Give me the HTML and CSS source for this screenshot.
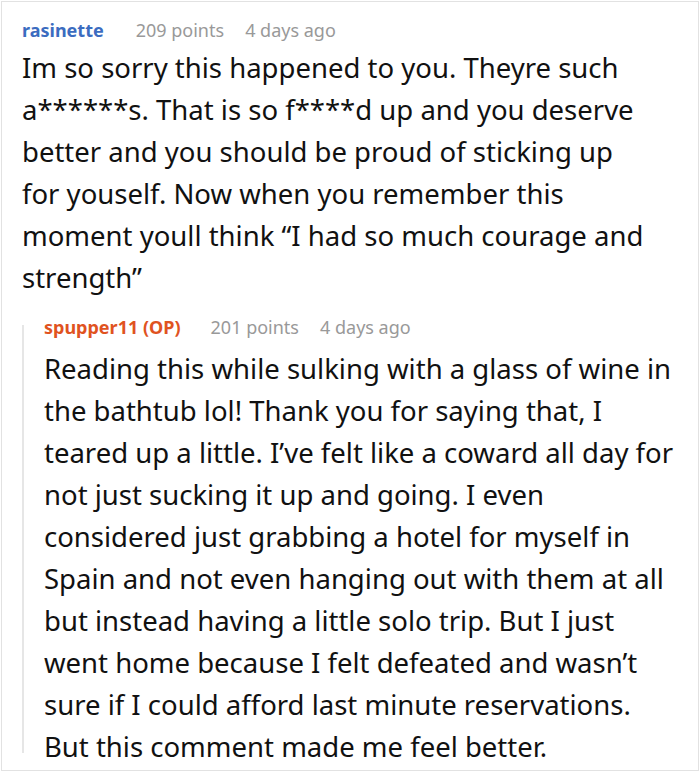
FILE: index.html
```html
<!DOCTYPE html>
<html>
<head>
<meta charset="utf-8">
<link rel="stylesheet" href="styles.css">
</head>
<body>
<div class="card">
  <div class="comment">
    <div class="meta">
      <span class="author">rasinette</span>
      <span class="info">209 points</span>
      <span class="info">4 days ago</span>
    </div>
    <div class="text text-main">Im so sorry this happened to you. Theyre such a******s. That is so f****d up and you deserve better and you should be proud of sticking up for youself. Now when you remember this moment youll think “I had so much courage and strength”</div>
  </div>
  <div class="reply">
    <div class="meta meta-reply">
      <span class="author op">spupper11 (OP)</span>
      <span class="info">201 points</span>
      <span class="info">4 days ago</span>
    </div>
    <div class="text text-reply">Reading this while sulking with a glass of wine in the bathtub lol! Thank you for saying that, I teared up a little. I’ve felt like a coward all day for not just sucking it up and going. I even considered just grabbing a hotel for myself in Spain and not even hanging out with them at all but instead having a little solo trip. But I just went home because I felt defeated and wasn’t sure if I could afford last minute reservations. But this comment made me feel better.</div>
  </div>
</div>
</body>
</html>
```

FILE: styles.css
```css
* { box-sizing: border-box; }
html, body { margin: 0; padding: 0; background: #fff; }
body { font-family: "Noto Sans", "Open Sans", sans-serif; color: #111; }
.card {
  margin: 1px;
  width: 698px;
  height: 770px;
  border: 1px solid #e2e2e2;
  padding: 16px 18px 0 20px;
  overflow: hidden;
}
.meta {
  display: flex;
  align-items: baseline;
  font-size: 18px;
  line-height: 24px;
}
.meta .author { margin-right: 32px; }
.meta .info + .info { margin-left: 21px; }
.author { font-weight: 700; color: #3b6cc0; }
.author.op { color: #e0531f; }
.info { color: #999; }
.text {
  font-size: 27.5px;
  line-height: 42px;
  margin-top: 5px;
}
.text-main { margin-right: 31px; }
.reply {
  display: flow-root;
  margin-top: 26px;
  border-left: 2px solid #e6e6e6;
  padding-left: 20px;
}
.meta-reply { margin-top: -10px; }
.meta-reply .author { margin-right: 30px; }
.text-reply { margin-top: 9px; margin-bottom: -15px; }
```
